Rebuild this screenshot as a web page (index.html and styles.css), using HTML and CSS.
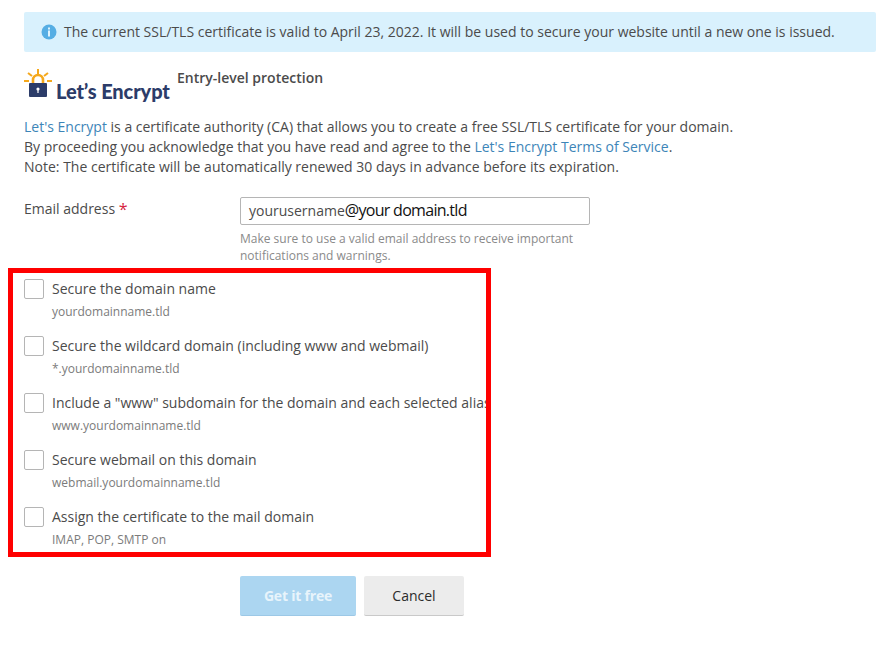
FILE: index.html
```html
<!DOCTYPE html>
<html lang="en">

<head>
    <meta charset="UTF-8">
    <meta name="viewport" content="width=device-width, initial-scale=1.0">
    <title>SSL/TLS Certificate</title>
    <link rel="stylesheet" href="styles.css">
</head>

<body>
    <div class="alert">
        <svg class="alert-icon" width="16" height="16" viewBox="0 0 16 16">
            <circle cx="8" cy="8" r="7.5" fill="#56aee4"></circle>
            <rect x="7" y="3.5" width="2" height="2" fill="#dff3fd"></rect>
            <rect x="7" y="6.5" width="2" height="6" fill="#dff3fd"></rect>
        </svg>
        <span>The current SSL/TLS certificate is valid to April 23, 2022. It will be used to secure your website until a new one is issued.</span>
    </div>

    <div class="brand">
        <div class="logo">
            <svg class="logo-mark" width="28" height="30" viewBox="0 0 28 30">
                <g stroke="#f5a81c" stroke-width="2" fill="none">
                    <path d="M14 1v5"></path>
                    <path d="M4 5l4 3"></path>
                    <path d="M24 5l-4 3"></path>
                    <path d="M0 13h5"></path>
                    <path d="M23 13h5"></path>
                    <path d="M9 15v-3a5 5 0 0 1 10 0v3" stroke-width="2.6"></path>
                </g>
                <rect x="5" y="15" width="18" height="14" rx="1" fill="#2c3c69"></rect>
                <circle cx="14" cy="21" r="1.6" fill="#fff"></circle>
                <rect x="13.4" y="21" width="1.2" height="4" fill="#fff"></rect>
            </svg>
            <span class="logo-text">Let’s Encrypt</span>
        </div>
        <div class="brand-title">Entry-level protection</div>
    </div>

    <p class="intro">
        <a href="#">Let's Encrypt</a> is a certificate authority (CA) that allows you to create a free SSL/TLS certificate for your domain.<br>
        By proceeding you acknowledge that you have read and agree to the <a href="#">Let's Encrypt Terms of Service</a>.<br>
        Note: The certificate will be automatically renewed 30 days in advance before its expiration.
    </p>

    <div class="field">
        <label class="field-label" for="email">Email address <span class="required">*</span></label>
        <div class="field-body">
            <div class="input" id="email">yourusername<span class="input-domain">@your domain.tld</span></div>
            <div class="hint">Make sure to use a valid email address to receive important notifications and warnings.</div>
        </div>
    </div>

    <div class="options">
        <div class="option">
            <span class="checkbox"></span>
            <div>
                <div class="option-title">Secure the domain name</div>
                <div class="option-sub">yourdomainname.tld</div>
            </div>
        </div>
        <div class="option">
            <span class="checkbox"></span>
            <div>
                <div class="option-title">Secure the wildcard domain (including www and webmail)</div>
                <div class="option-sub">*.yourdomainname.tld</div>
            </div>
        </div>
        <div class="option">
            <span class="checkbox"></span>
            <div>
                <div class="option-title">Include a "www" subdomain for the domain and each selected alias</div>
                <div class="option-sub">www.yourdomainname.tld</div>
            </div>
        </div>
        <div class="option">
            <span class="checkbox"></span>
            <div>
                <div class="option-title">Secure webmail on this domain</div>
                <div class="option-sub">webmail.yourdomainname.tld</div>
            </div>
        </div>
        <div class="option">
            <span class="checkbox"></span>
            <div>
                <div class="option-title">Assign the certificate to the mail domain</div>
                <div class="option-sub">IMAP, POP, SMTP on</div>
            </div>
        </div>
    </div>

    <div class="actions">
        <button type="button" class="btn btn-primary">Get it free</button>
        <button type="button" class="btn">Cancel</button>
    </div>
</body>

</html>
```

FILE: styles.css
```css
* {
    margin: 0;
    padding: 0;
    box-sizing: border-box;
}

body {
    padding: 12px 9px 0 24px;
    font-family: "Open Sans", sans-serif;
    font-size: 14px;
    line-height: 20px;
    color: #4b4b4b;
    background: #fff;
}

a {
    color: #3d85b8;
    text-decoration: none;
}

.alert {
    display: flex;
    align-items: center;
    gap: 7px;
    height: 40px;
    padding-left: 17px;
    background: #d9f1fd;
    border-radius: 2px;
    white-space: nowrap;
}

.brand {
    display: flex;
    gap: 7px;
    margin-top: 16px;
    height: 39px;
}

.logo {
    display: flex;
    align-items: flex-end;
    width: 146px;
    height: 36px;
}

.logo-mark {
    flex: none;
    align-self: flex-start;
    margin-right: 4px;
}

.logo-text {
    font-family: "Lato", sans-serif;
    font-weight: 900;
    font-size: 20px;
    letter-spacing: -0.1px;
    line-height: 26px;
    color: #2c3c69;
    white-space: nowrap;
}

.brand-title {
    font-weight: 600;
    line-height: 20px;
}

.intro {
    white-space: nowrap;
    margin-top: 10px;
}

.field {
    display: flex;
    margin-top: 20px;
}

.field-label {
    width: 216px;
    flex: none;
    margin-top: 2px;
}

.required {
    color: #d6243f;
    font-size: 16px;
    line-height: 1;
    vertical-align: -1px;
}

.field-body {
    width: 350px;
}

.input {
    height: 28px;
    padding: 2px 8px;
    border: 1px solid #b5b5b5;
    border-radius: 2px;
    font-size: 14px;
    line-height: 20px;
}

.input-domain {
    color: #111;
    font-size: 16px;
    letter-spacing: -0.7px;
}

.hint {
    margin-top: 5px;
    font-size: 12px;
    line-height: 17px;
    color: #8a8a8a;
}

.options {
    width: 483px;
    height: 289px;
    margin: 4px 0 0 -16px;
    padding: 6px 0 0 11px;
    border: 5px solid #ff0000;
    overflow: hidden;
}

.option {
    display: flex;
    gap: 8px;
    height: 57px;
    white-space: nowrap;
}

.checkbox {
    flex: none;
    width: 20px;
    height: 20px;
    border: 1px solid #b5b5b5;
    border-radius: 2px;
}

.option-sub {
    margin-top: 3px;
    font-size: 12px;
    color: #7b7b7b;
}

.actions {
    display: flex;
    gap: 8px;
    margin: 19px 0 0 216px;
}

.btn {
    width: 100px;
    height: 40px;
    border: 0;
    border-bottom: 1px solid #c9c9c9;
    border-radius: 2px;
    background: #ececec;
    font-family: "Open Sans", sans-serif;
    font-size: 14px;
    font-weight: 500;
    color: #2b2b2b;
}

.btn-primary {
    width: 116px;
    background: #acd6f1;
    border-bottom-color: #9cc8e6;
    font-weight: 700;
    letter-spacing: -0.2px;
    color: #e8f4fb;
}
```
